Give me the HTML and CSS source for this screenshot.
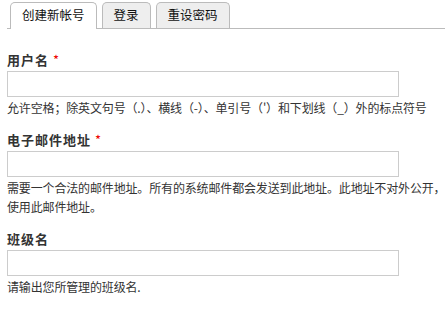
FILE: index.html
```html
<!DOCTYPE html>
<html lang="zh-CN">
<head>
<meta charset="utf-8">
<title>创建新帐号</title>
<link rel="stylesheet" href="styles.css">
</head>
<body>
<div class="page">
  <ul class="tabs">
    <li class="tab active"><a href="#">创建新帐号</a></li>
    <li class="tab"><a href="#">登录</a></li>
    <li class="tab"><a href="#">重设密码</a></li>
  </ul>
  <form class="form">
    <div class="item">
      <label class="label">用户名 <span class="req">*</span></label>
      <input class="field" type="text">
      <div class="desc">允许空格；除英文句号（.）、横线（-）、单引号（'）和下划线（_）外的标点符号</div>
    </div>
    <div class="item">
      <label class="label">电子邮件地址 <span class="req">*</span></label>
      <input class="field" type="text">
      <div class="desc">需要一个合法的邮件地址。所有的系统邮件都会发送到此地址。此地址不对外公开，<br>使用此邮件地址。</div>
    </div>
    <div class="item">
      <label class="label">班级名</label>
      <input class="field" type="text">
      <div class="desc">请输出您所管理的班级名.</div>
    </div>
  </form>
</div>
</body>
</html>
```
FILE: styles.css
```css
html, body {
  margin: 0;
  padding: 0;
  background: #fff;
  overflow: hidden;
}
body {
  font-family: "Noto Sans CJK SC", "Liberation Sans", sans-serif;
  color: #333;
}
.page {
  padding-left: 7px;
}
.tabs {
  list-style: none;
  margin: 0;
  padding: 2px 0 0 3px;
  display: flex;
  gap: 5px;
  border-bottom: 1px solid #bbb;
}
.tab a {
  display: block;
  box-sizing: border-box;
  height: 26px;
  line-height: 24px;
  padding: 0 11px;
  border: 1px solid #bbb;
  border-bottom: none;
  border-radius: 5px 5px 0 0;
  background: #eee;
  color: #111;
  font-size: 12.5px;
  text-decoration: none;
  white-space: nowrap;
}
.tab.active a {
  background: #fff;
  height: 27px;
  margin-bottom: -1px;
}
.form {
  margin: 22px 0 0 0;
}
.item {
  display: flex;
  flex-direction: column;
  align-items: flex-start;
  margin-bottom: 14px;
}
.label {
  font-size: 13px;
  font-weight: bold;
  line-height: 18px;
  letter-spacing: 1px;
  color: #333;
  margin-bottom: 2px;
}
.req {
  color: #e00;
  font-weight: normal;
}
.field {
  box-sizing: border-box;
  width: 392px;
  height: 26px;
  margin: 0;
  border: 1px solid #ccc;
  background: #fff;
  padding: 2px 4px;
}
.desc {
  font-size: 12px;
  line-height: 19px;
  margin-top: 1px;
  white-space: nowrap;
  letter-spacing: -0.15px;
  color: #333;
}
```
